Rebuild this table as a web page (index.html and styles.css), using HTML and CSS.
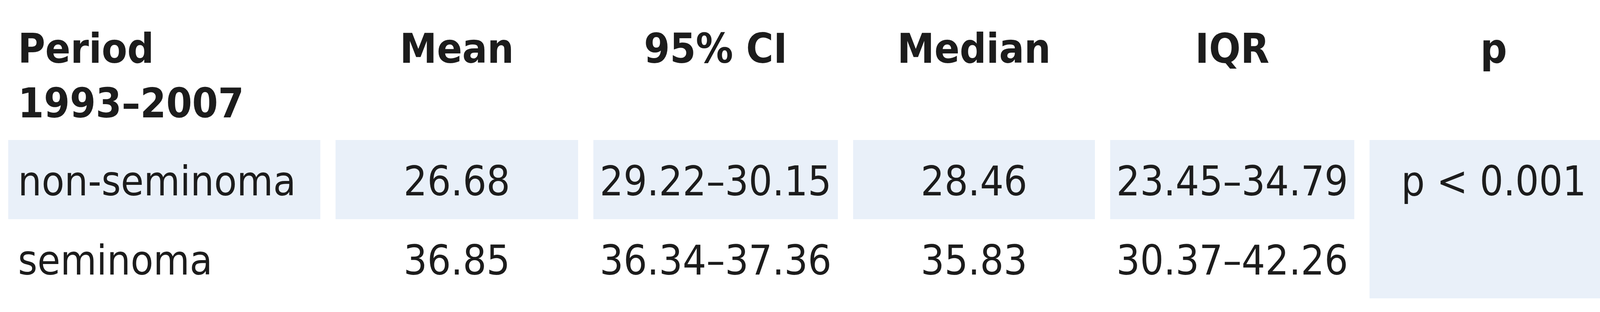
FILE: index.html
```html
<!DOCTYPE html>
<html lang="en">
<head>
<meta charset="utf-8">
<title>Period 1993–2007</title>
<link rel="stylesheet" href="styles.css">
</head>
<body>
<div class="table">
  <div class="cell head first">Period<br>1993–2007</div>
  <div class="cell head">Mean</div>
  <div class="cell head">95% CI</div>
  <div class="cell head">Median</div>
  <div class="cell head">IQR</div>
  <div class="cell head">p</div>

  <div class="cell data shade first">non-seminoma</div>
  <div class="cell data shade">26.68</div>
  <div class="cell data shade">29.22–30.15</div>
  <div class="cell data shade">28.46</div>
  <div class="cell data shade">23.45–34.79</div>
  <div class="cell pval shade">p &lt; 0.001</div>

  <div class="cell data first">seminoma</div>
  <div class="cell data">36.85</div>
  <div class="cell data">36.34–37.36</div>
  <div class="cell data">35.83</div>
  <div class="cell data">30.37–42.26</div>
</div>
</body>
</html>
```

FILE: styles.css
```css
html, body {
  margin: 0;
  padding: 0;
  background: #ffffff;
}

body {
  font-family: "DejaVu Sans Condensed", "Liberation Sans", sans-serif;
  color: #1c1c1c;
  font-size: 106px;
  line-height: 140px;
}

.table {
  display: grid;
  grid-template-columns: 799px 621px 626px 619px 625px 636px;
  grid-template-rows: 359px 203px 203px;
  column-gap: 39px;
  padding-left: 21px;
}

.cell {
  text-align: center;
  white-space: nowrap;
}

.cell.first {
  text-align: left;
  padding-left: 25px;
}

.head {
  font-weight: bold;
  padding-top: 55px;
}

.data {
  display: flex;
  align-items: center;
  justify-content: center;
  padding-top: 8px;
}

.data.first {
  justify-content: flex-start;
}

.shade {
  background: #e9f0f9;
}

.pval {
  grid-row: 2 / span 2;
  grid-column: 6;
  padding-top: 36px;
}
```
